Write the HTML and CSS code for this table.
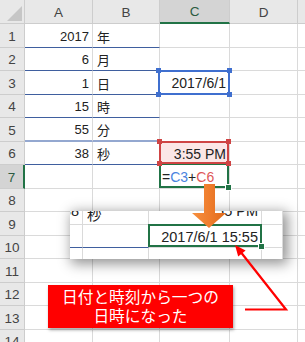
FILE: index.html
```html
<!DOCTYPE html>
<html lang="ja">
<head>
<meta charset="utf-8">
<title>日時の結合</title>
<link rel="stylesheet" href="styles.css">
</head>
<body>
<div class="sheet">
  <div class="hd corner"><span class="tri"></span></div>
  <div class="hd">A</div>
  <div class="hd">B</div>
  <div class="hd sel-col">C</div>
  <div class="hd">D</div>
  <div class="hd"></div>

  <div class="hd">1</div>
  <div class="c r bb">2017</div>
  <div class="c bb">年</div>
  <div class="c"></div><div class="c"></div><div class="c"></div>

  <div class="hd">2</div>
  <div class="c r bb">6</div>
  <div class="c bb">月</div>
  <div class="c"></div><div class="c"></div><div class="c"></div>

  <div class="hd">3</div>
  <div class="c r bb">1</div>
  <div class="c bb">日</div>
  <div class="c r wide">2017/6/1<span class="ref ref-blue"><i class="h tl"></i><i class="h tr"></i><i class="h bl"></i><i class="h br"></i></span></div>
  <div class="c"></div><div class="c"></div>

  <div class="hd">4</div>
  <div class="c r bb">15</div>
  <div class="c bb">時</div>
  <div class="c"></div><div class="c"></div><div class="c"></div>

  <div class="hd">5</div>
  <div class="c r bb2">55</div>
  <div class="c bb2">分</div>
  <div class="c"></div><div class="c"></div><div class="c"></div>

  <div class="hd">6</div>
  <div class="c r bb">38</div>
  <div class="c bb">秒</div>
  <div class="c r wide pink">3:55 PM<span class="ref ref-red"><i class="h tl"></i><i class="h tr"></i><i class="h bl"></i><i class="h br"></i></span></div>
  <div class="c"></div><div class="c"></div>

  <div class="hd sel-row">7</div>
  <div class="c"></div>
  <div class="c"></div>
  <div class="c wide formula"><span class="op">=</span><span class="rb">C3</span><span class="op">+</span><span class="rr">C6</span><span class="ref ref-green"><i class="fh"></i></span></div>
  <div class="c"></div><div class="c"></div>

  <div class="hd">8</div>
  <div class="c"></div><div class="c"></div><div class="c"></div><div class="c"></div><div class="c"></div>
  <div class="hd">9</div>
  <div class="c"></div><div class="c"></div><div class="c"></div><div class="c"></div><div class="c"></div>
  <div class="hd">10</div>
  <div class="c"></div><div class="c"></div><div class="c"></div><div class="c"></div><div class="c"></div>
  <div class="hd">11</div>
  <div class="c"></div><div class="c"></div><div class="c"></div><div class="c"></div><div class="c"></div>
  <div class="hd">12</div>
  <div class="c"></div><div class="c"></div><div class="c"></div><div class="c"></div><div class="c"></div>
  <div class="hd">13</div>
  <div class="c"></div><div class="c"></div><div class="c"></div><div class="c"></div><div class="c"></div>
  <div class="hd">14</div>
  <div class="c"></div><div class="c"></div><div class="c"></div><div class="c"></div><div class="c"></div>
</div>

<div class="zoom">
  <div class="zgrid">
    <div class="c r zc ztop">38</div>
    <div class="c zc ztop">秒</div>
    <div class="c r zc ztop">3:55 PM</div>
    <div class="c"></div>

    <div class="c bb"></div>
    <div class="c bb"></div>
    <div class="c r zc">2017/6/1 15:55<span class="ref ref-green2"><i class="fh"></i></span></div>
    <div class="c"></div>

    <div class="c"></div><div class="c"></div><div class="c"></div><div class="c"></div>
  </div>
</div>

<svg class="arrow" width="38" height="48" viewBox="0 0 38 48">
  <defs>
    <linearGradient id="og" x1="0" y1="0" x2="1" y2="0">
      <stop offset="0" stop-color="#f6903f"/>
      <stop offset="0.5" stop-color="#ef7d2d"/>
      <stop offset="1" stop-color="#e06a1b"/>
    </linearGradient>
  </defs>
  <polygon points="14,2 25,2 25,31 36,31 19,46 2,31 14,31" fill="url(#og)"/>
</svg>

<div class="callout">日付と時刻から一つの<br>日時になった</div>

<svg class="pointer" width="305" height="342" viewBox="0 0 305 342">
  <polyline points="245,309.5 286,309.5 241.5,253" fill="none" stroke="#ff0000" stroke-width="2.2" stroke-linejoin="miter"/>
  <polygon points="235,245 245.6,250.6 238.2,256.6" fill="#ff0000"/>
</svg>
</body>
</html>
```

FILE: styles.css
```css
* {
  box-sizing: border-box;
  margin: 0;
  padding: 0;
}

html, body {
  width: 305px;
  height: 342px;
  overflow: hidden;
  background: #ffffff;
}

body {
  position: relative;
  font-family: "Liberation Sans", "Noto Sans CJK JP", sans-serif;
  color: #222222;
}

.sheet {
  display: grid;
  grid-template-columns: 25px 68px 67px 70px 68px 1fr;
  grid-template-rows: 24px repeat(7, 24px 23px);
}

.hd {
  background: #e8e8e8;
  color: #444444;
  font-size: 13.5px;
  display: flex;
  align-items: center;
  justify-content: center;
  padding-top: 1px;
  border-right: 1px solid #cdcdcd;
  border-bottom: 1px solid #cdcdcd;
}

.corner {
  justify-content: flex-end;
  align-items: flex-end;
  padding: 0 2px 2px 0;
}

.tri {
  width: 0;
  height: 0;
  border-left: 15px solid transparent;
  border-bottom: 15px solid #c6c6c6;
}

.hd.sel-col {
  background: #d4d4d4;
  color: #2b5b40;
  border-bottom: 2px solid #217346;
}

.hd.sel-row {
  background: #d4d4d4;
  color: #2b5b40;
  border-right: 2px solid #217346;
}

.c {
  position: relative;
  display: flex;
  align-items: center;
  padding: 1px 3px 0 4px;
  font-size: 13px;
  white-space: nowrap;
  border-right: 1px solid #dadada;
  border-bottom: 1px solid #dadada;
}

.c.r {
  justify-content: flex-end;
  padding: 1px 3px 0 2px;
}

.bb {
  border-bottom-color: #3f5f9f;
}

.bb2 {
  border-bottom: 2px solid #94a8d0;
}

.wide {
  font-size: 14px;
}

.pink {
  background: #fbe6e6;
}

.formula {
  padding-left: 2px;
}

.op { color: #222222; }
.rb { color: #4a84e0; }
.rr { color: #e05858; }

.ref {
  position: absolute;
  border: 2px solid;
  pointer-events: none;
}

.ref-blue {
  left: -2px;
  right: -1px;
  top: -1px;
  bottom: -1px;
  border-color: #3f6fcf;
  z-index: 2;
}

.ref-red {
  left: -1px;
  right: 0;
  top: -1px;
  bottom: 0;
  border-color: #cf4444;
  z-index: 3;
}

.ref-green {
  left: -1px;
  right: 0;
  top: -2px;
  bottom: 0;
  border-color: #217346;
  z-index: 2;
}

.ref-green2 {
  left: -1px;
  right: -1px;
  top: -1px;
  bottom: 0;
  border-color: #217346;
  z-index: 2;
}

.h {
  position: absolute;
  width: 5px;
  height: 5px;
}

.ref-blue .h { background: #3f6fcf; }
.ref-red .h { background: #cf4444; }

.h.tl { left: -4px; top: -4px; }
.h.tr { right: -4px; top: -4px; }
.h.bl { left: -4px; bottom: -4px; }
.h.br { right: -4px; bottom: -4px; }

.fh {
  position: absolute;
  right: -4px;
  bottom: -4px;
  width: 5px;
  height: 5px;
  background: #217346;
  border: 1px solid #ffffff;
  box-sizing: content-box;
  margin: -1px;
}

.zoom {
  position: absolute;
  left: 70px;
  top: 211px;
  width: 213px;
  height: 48px;
  background: #ffffff;
  overflow: hidden;
  box-shadow: 3px 3px 12px 2px rgba(0, 0, 0, 0.42);
  z-index: 5;
}

.zgrid {
  display: grid;
  grid-template-columns: 13px 66px 113px 1fr;
  grid-template-rows: 24px 23px 23px;
  margin-top: -10px;
}

.zc {
  font-size: 14.5px;
}

.c.ztop {
  align-items: flex-start;
  padding-top: 2px;
}

.arrow {
  position: absolute;
  left: 190px;
  top: 182px;
  z-index: 6;
}

.callout {
  position: absolute;
  left: 48px;
  top: 285px;
  width: 185px;
  height: 43px;
  padding-top: 2px;
  background: #ff0000;
  color: #ffffff;
  font-family: "Noto Sans CJK JP", sans-serif;
  font-size: 15.7px;
  line-height: 19px;
  text-align: center;
  box-shadow: 1px 2px 3px rgba(0, 0, 0, 0.35);
  z-index: 6;
}

.pointer {
  position: absolute;
  left: 0;
  top: 0;
  z-index: 7;
  pointer-events: none;
}
```
